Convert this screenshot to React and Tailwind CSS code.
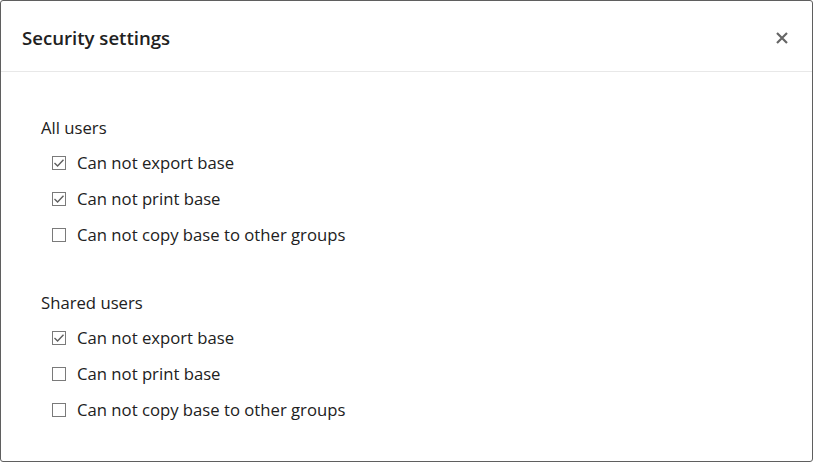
import { useState } from 'react';

const sections = [
  {
    title: 'All users',
    items: [
      { label: 'Can not export base', checked: true },
      { label: 'Can not print base', checked: true },
      { label: 'Can not copy base to other groups', checked: false },
    ],
  },
  {
    title: 'Shared users',
    items: [
      { label: 'Can not export base', checked: true },
      { label: 'Can not print base', checked: false },
      { label: 'Can not copy base to other groups', checked: false },
    ],
  },
];

function Checkbox({ checked }) {
  return (
    <span className="flex h-[14px] w-[14px] shrink-0 items-center justify-center border border-[#7a7a7a] bg-white">
      {checked && (
        <svg viewBox="0 0 12 12" className="h-3 w-3">
          <path d="M1.5 6 L4.6 9 L10.5 2.8" fill="none" stroke="#5f5f5f" strokeWidth="1.4" />
        </svg>
      )}
    </span>
  );
}

export default function App() {
  const [data, setData] = useState(sections);

  const toggle = (si, ii) => {
    setData((prev) =>
      prev.map((s, a) =>
        a !== si ? s : { ...s, items: s.items.map((it, b) => (b !== ii ? it : { ...it, checked: !it.checked })) }
      )
    );
  };

  return (
    <div className="h-[462px] w-[813px] bg-white font-['Open_Sans',sans-serif]">
      <div className="flex h-full flex-col rounded-[3px] border border-[#5f5f5f]">
        <div className="flex h-[71px] shrink-0 items-center justify-between border-b border-[#e8e8e8] pl-[21px] pr-[24px] pt-[3px]">
          <h1 className="text-[18.6px] font-semibold text-[#212121]">Security settings</h1>
          <svg viewBox="0 0 12 12" className="h-3 w-3">
            <path d="M1 1 L11 11 M11 1 L1 11" stroke="#666" strokeWidth="2.2" />
          </svg>
        </div>
        <div className="flex flex-col gap-[38px] pl-[40px] pt-[44px]">
          {data.map((s, si) => (
            <div key={s.title} className="flex flex-col gap-[5px]">
              <div className="flex h-6 items-center text-[16.7px] text-[#212121]">{s.title}</div>
              <div className="flex flex-col">
                {s.items.map((it, ii) => (
                  <label
                    key={it.label}
                    onClick={() => toggle(si, ii)}
                    className="flex h-9 cursor-pointer items-center gap-[11px] pl-[11px] text-[16.7px] text-[#212121]"
                  >
                    <Checkbox checked={it.checked} />
                    <span>{it.label}</span>
                  </label>
                ))}
              </div>
            </div>
          ))}
        </div>
      </div>
    </div>
  );
}
